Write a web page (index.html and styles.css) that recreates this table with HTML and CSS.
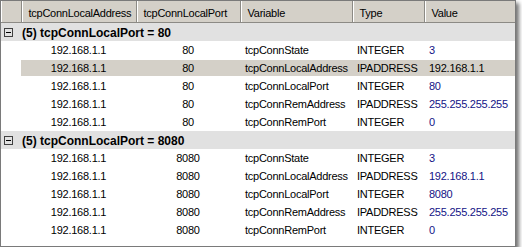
FILE: index.html
```html
<!DOCTYPE html>
<html><head>
<meta charset="UTF-8">
<title>tcpConnTable</title>
<link rel="stylesheet" href="styles.css">
</head>
<body>
  <div class="grid">
    <table class="grid-table">
      <colgroup>
        <col class="c-indent">
        <col class="c-addr">
        <col class="c-port">
        <col class="c-var">
        <col class="c-type">
        <col class="c-value">
      </colgroup>
      <thead>
        <tr>
          <th></th>
          <th>tcpConnLocalAddress</th>
          <th>tcpConnLocalPort</th>
          <th>Variable</th>
          <th>Type</th>
          <th>Value</th>
        </tr>
      </thead>
      <tbody>
        <tr class="group-row">
          <td colspan="6"><div class="group-label"><span class="toggle"></span>(5) tcpConnLocalPort = 80</div></td>
        </tr>
        <tr>
          <td></td><td class="center">192.168.1.1</td><td class="center">80</td>
          <td>tcpConnState</td><td>INTEGER</td><td class="value">3</td>
        </tr>
        <tr class="selected">
          <td></td><td class="center">192.168.1.1</td><td class="center">80</td>
          <td>tcpConnLocalAddress</td><td>IPADDRESS</td><td class="value">192.168.1.1</td>
        </tr>
        <tr>
          <td></td><td class="center">192.168.1.1</td><td class="center">80</td>
          <td>tcpConnLocalPort</td><td>INTEGER</td><td class="value">80</td>
        </tr>
        <tr>
          <td></td><td class="center">192.168.1.1</td><td class="center">80</td>
          <td>tcpConnRemAddress</td><td>IPADDRESS</td><td class="value">255.255.255.255</td>
        </tr>
        <tr>
          <td></td><td class="center">192.168.1.1</td><td class="center">80</td>
          <td>tcpConnRemPort</td><td>INTEGER</td><td class="value">0</td>
        </tr>
        <tr class="group-row">
          <td colspan="6"><div class="group-label"><span class="toggle"></span>(5) tcpConnLocalPort = 8080</div></td>
        </tr>
        <tr>
          <td></td><td class="center">192.168.1.1</td><td class="center">8080</td>
          <td>tcpConnState</td><td>INTEGER</td><td class="value">3</td>
        </tr>
        <tr>
          <td></td><td class="center">192.168.1.1</td><td class="center">8080</td>
          <td>tcpConnLocalAddress</td><td>IPADDRESS</td><td class="value">192.168.1.1</td>
        </tr>
        <tr>
          <td></td><td class="center">192.168.1.1</td><td class="center">8080</td>
          <td>tcpConnLocalPort</td><td>INTEGER</td><td class="value">8080</td>
        </tr>
        <tr>
          <td></td><td class="center">192.168.1.1</td><td class="center">8080</td>
          <td>tcpConnRemAddress</td><td>IPADDRESS</td><td class="value">255.255.255.255</td>
        </tr>
        <tr>
          <td></td><td class="center">192.168.1.1</td><td class="center">8080</td>
          <td>tcpConnRemPort</td><td>INTEGER</td><td class="value">0</td>
        </tr>
      </tbody>
    </table>
  </div>
</body></html>
```

FILE: styles.css
```css
body {
  margin: 0;
  padding: 0;
  background-color: #fff;
  font-family: 'Liberation Sans', Arial, sans-serif;
  font-size: 11px;
  letter-spacing: -0.25px;
  color: #000;
}
.grid {
  width: 516px;
  height: 247px;
  box-sizing: border-box;
  border: 1px solid #7a7a7a;
  background-color: #fff;
  box-shadow: 3px 3px 4px rgba(0,0,0,0.55);
  overflow: hidden;
}
.grid-table {
  border-collapse: collapse;
  table-layout: fixed;
  width: 514px;
}
.c-indent { width: 20px; }
.c-addr { width: 115px; }
.c-port { width: 104px; }
.c-var { width: 112px; }
.c-type { width: 72px; }
.c-value { width: 91px; }

th {
  height: 19px;
  padding: 2px 0 0 7px;
  background-color: #d4d0c8;
  border-right: 1px solid #8c8a85;
  border-bottom: 1px solid #8c8a85;
  box-shadow: inset 1px 0 #fff;
  font-weight: normal;
  text-align: left;
  white-space: nowrap;
  overflow: hidden;
}
td {
  height: 18px;
  padding: 0 0 0 5px;
  white-space: nowrap;
  overflow: hidden;
}
td.center {
  text-align: center;
  padding: 0;
}
td.value {
  color: #131386;
}
.group-row td {
  background-color: #e1e1e1;
  padding: 0;
}
.group-label {
  display: flex;
  align-items: center;
  padding-top: 1px;
  font-weight: bold;
  font-size: 12px;
  letter-spacing: 0;
}
.toggle {
  position: relative;
  width: 7px;
  height: 7px;
  border: 1px solid #404040;
  margin: 0 9px 0 3px;
}
.toggle::after {
  content: "";
  position: absolute;
  left: 1px;
  top: 3px;
  width: 5px;
  height: 1px;
  background-color: #000;
}
.selected td {
  background-color: #d4d0c8;
  box-shadow: inset 0 1px #fff, inset 0 -1px #fff;
}
.selected td:first-child {
  background-color: #fff;
}
.selected td.value {
  color: #000;
}
```
